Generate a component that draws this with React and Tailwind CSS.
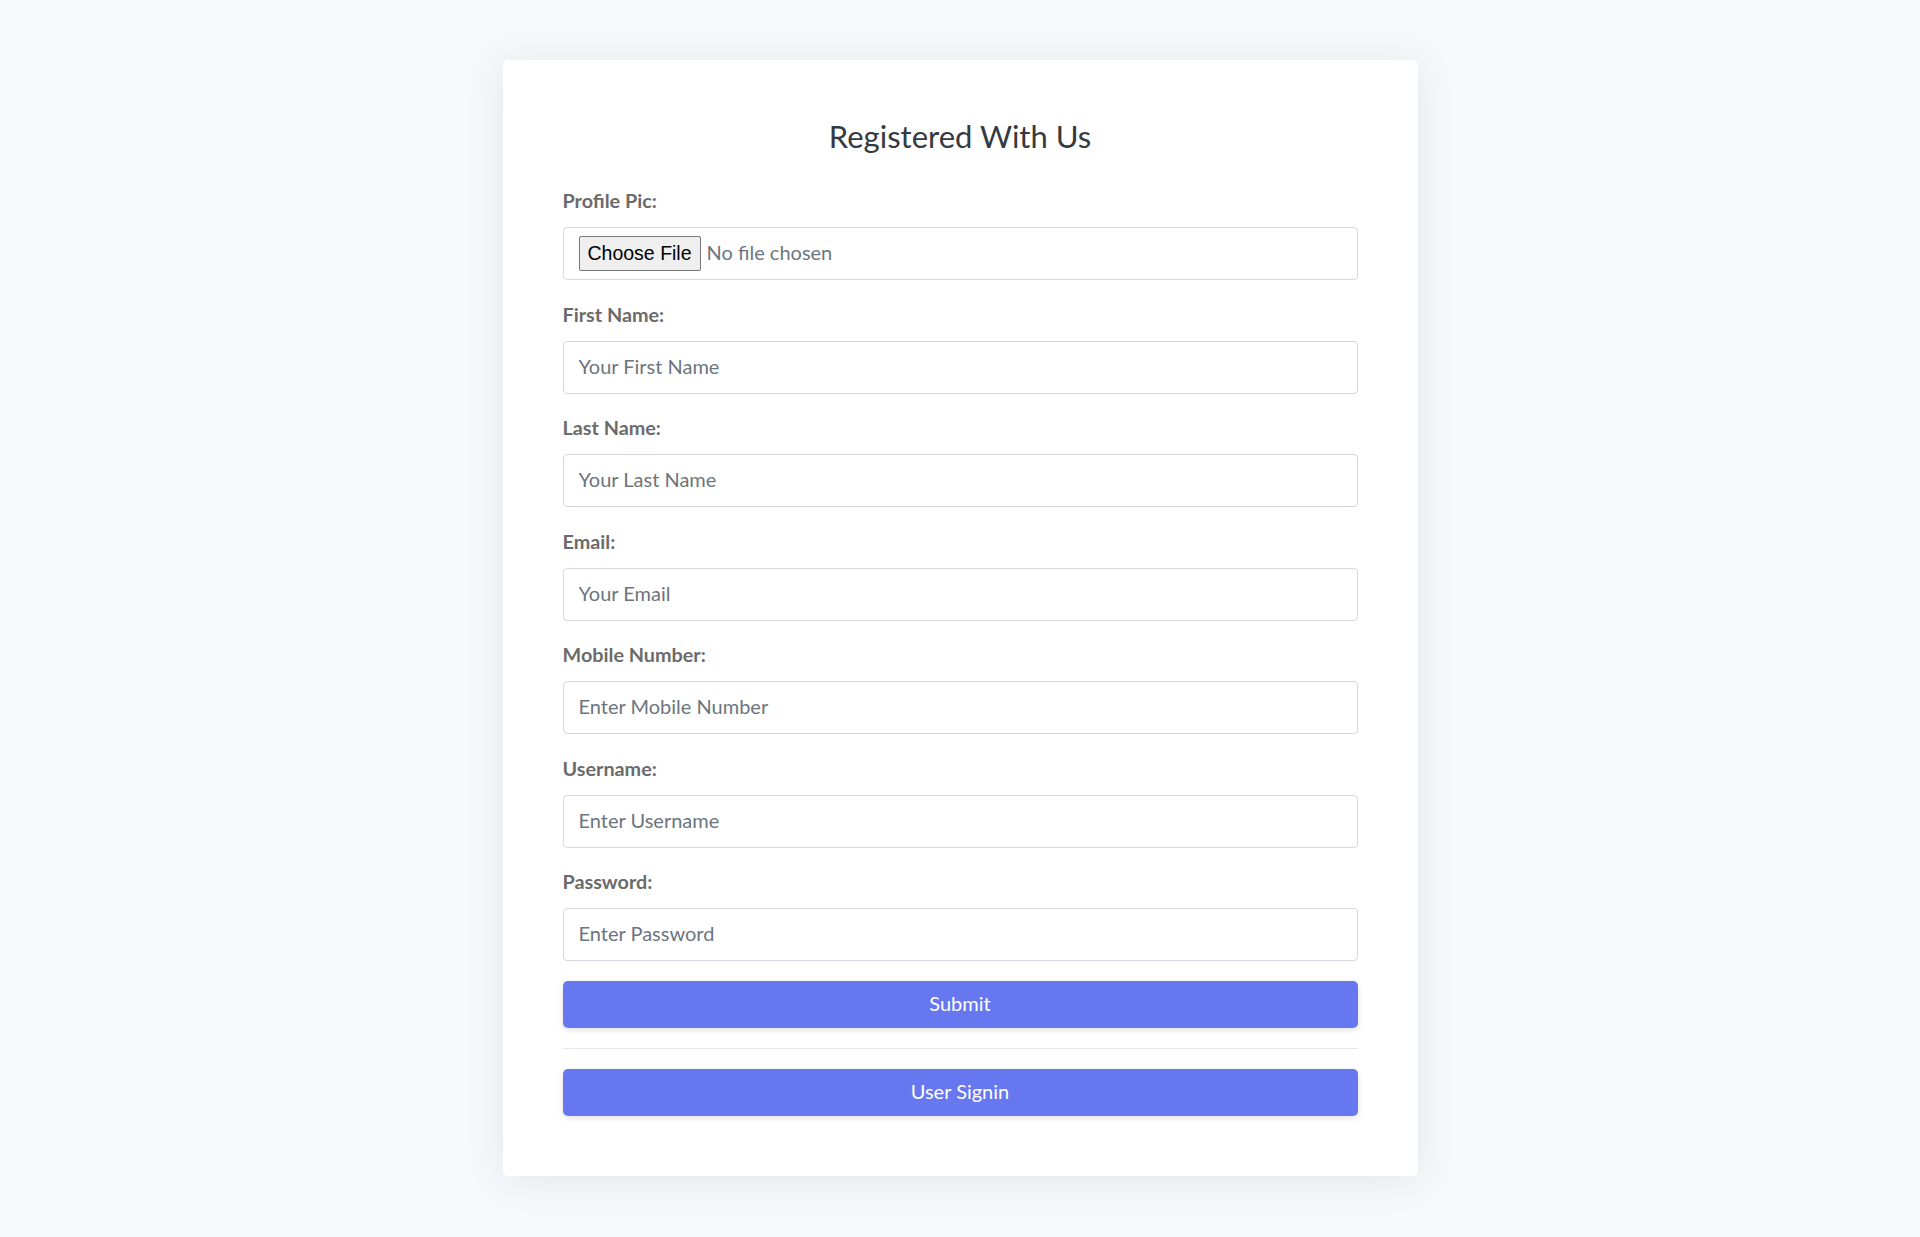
import React from "react";

const fields = [
  { label: "First Name:", placeholder: "Your First Name", type: "text" },
  { label: "Last Name:", placeholder: "Your Last Name", type: "text" },
  { label: "Email:", placeholder: "Your Email", type: "email" },
  { label: "Mobile Number:", placeholder: "Enter Mobile Number", type: "text" },
  { label: "Username:", placeholder: "Enter Username", type: "text" },
  { label: "Password:", placeholder: "Enter Password", type: "password" },
];

const App = () => {
  return (
    <div className="min-h-screen bg-[#f7f8fc] pt-[60px] pb-[62px] font-['Lato','Noto_Sans',sans-serif]">
      <div className="mx-auto w-[915px] bg-white rounded-[5px] shadow-[0_4px_40px_rgba(0,0,0,0.08)] px-[60px] pt-[60px] pb-[60px]">
        <h2 className="text-center text-[31px] leading-[32px] text-[#343a40] mb-[34px]">Registered With Us</h2>

        {/* Profile pic */}
        <div className="mb-[19.5px]">
          <label className="block text-[19.8px] leading-[28px] font-bold text-[#6b6b6b]">Profile Pic:</label>
          <div className="mt-[13px] h-[53px] border border-[#d6d6e6] rounded-[4px] flex items-center px-[15px]">
            <span className="h-[35px] px-[8px] flex items-center bg-[#efefef] border border-[#767676] rounded-[2px] text-[19.5px] text-black font-['Liberation_Sans',sans-serif]">
              Choose File
            </span>
            <span className="ml-[6px] pb-[3px] text-[20px] text-[#6c757d]">No file chosen</span>
          </div>
        </div>

        {fields.map((f) => (
          <div key={f.label} className="mb-[19.5px]">
            <label className="block text-[19.8px] leading-[28px] font-bold text-[#6b6b6b]">{f.label}</label>
            <input
              type={f.type}
              placeholder={f.placeholder}
              className="mt-[13px] block w-full h-[53px] border border-[#d6d6e6] rounded-[4px] px-[15px] pb-[3px] text-[20px] text-[#495057] placeholder:text-[#6c757d] outline-none"
            />
          </div>
        ))}

        <button className="block w-full h-[47px] rounded-[5px] bg-[#6777ef] text-white text-[20px] pb-[2px] shadow-[0_2px_6px_rgba(0,0,0,0.12)]">
          Submit
        </button>
        <hr className="my-[20px] border-0 border-t border-[#e6e6ec]" />
        <button className="block w-full h-[47px] rounded-[5px] bg-[#6777ef] text-white text-[20px] pb-[2px] shadow-[0_2px_6px_rgba(0,0,0,0.12)]">
          User Signin
        </button>
      </div>
    </div>
  );
};

export default App;
